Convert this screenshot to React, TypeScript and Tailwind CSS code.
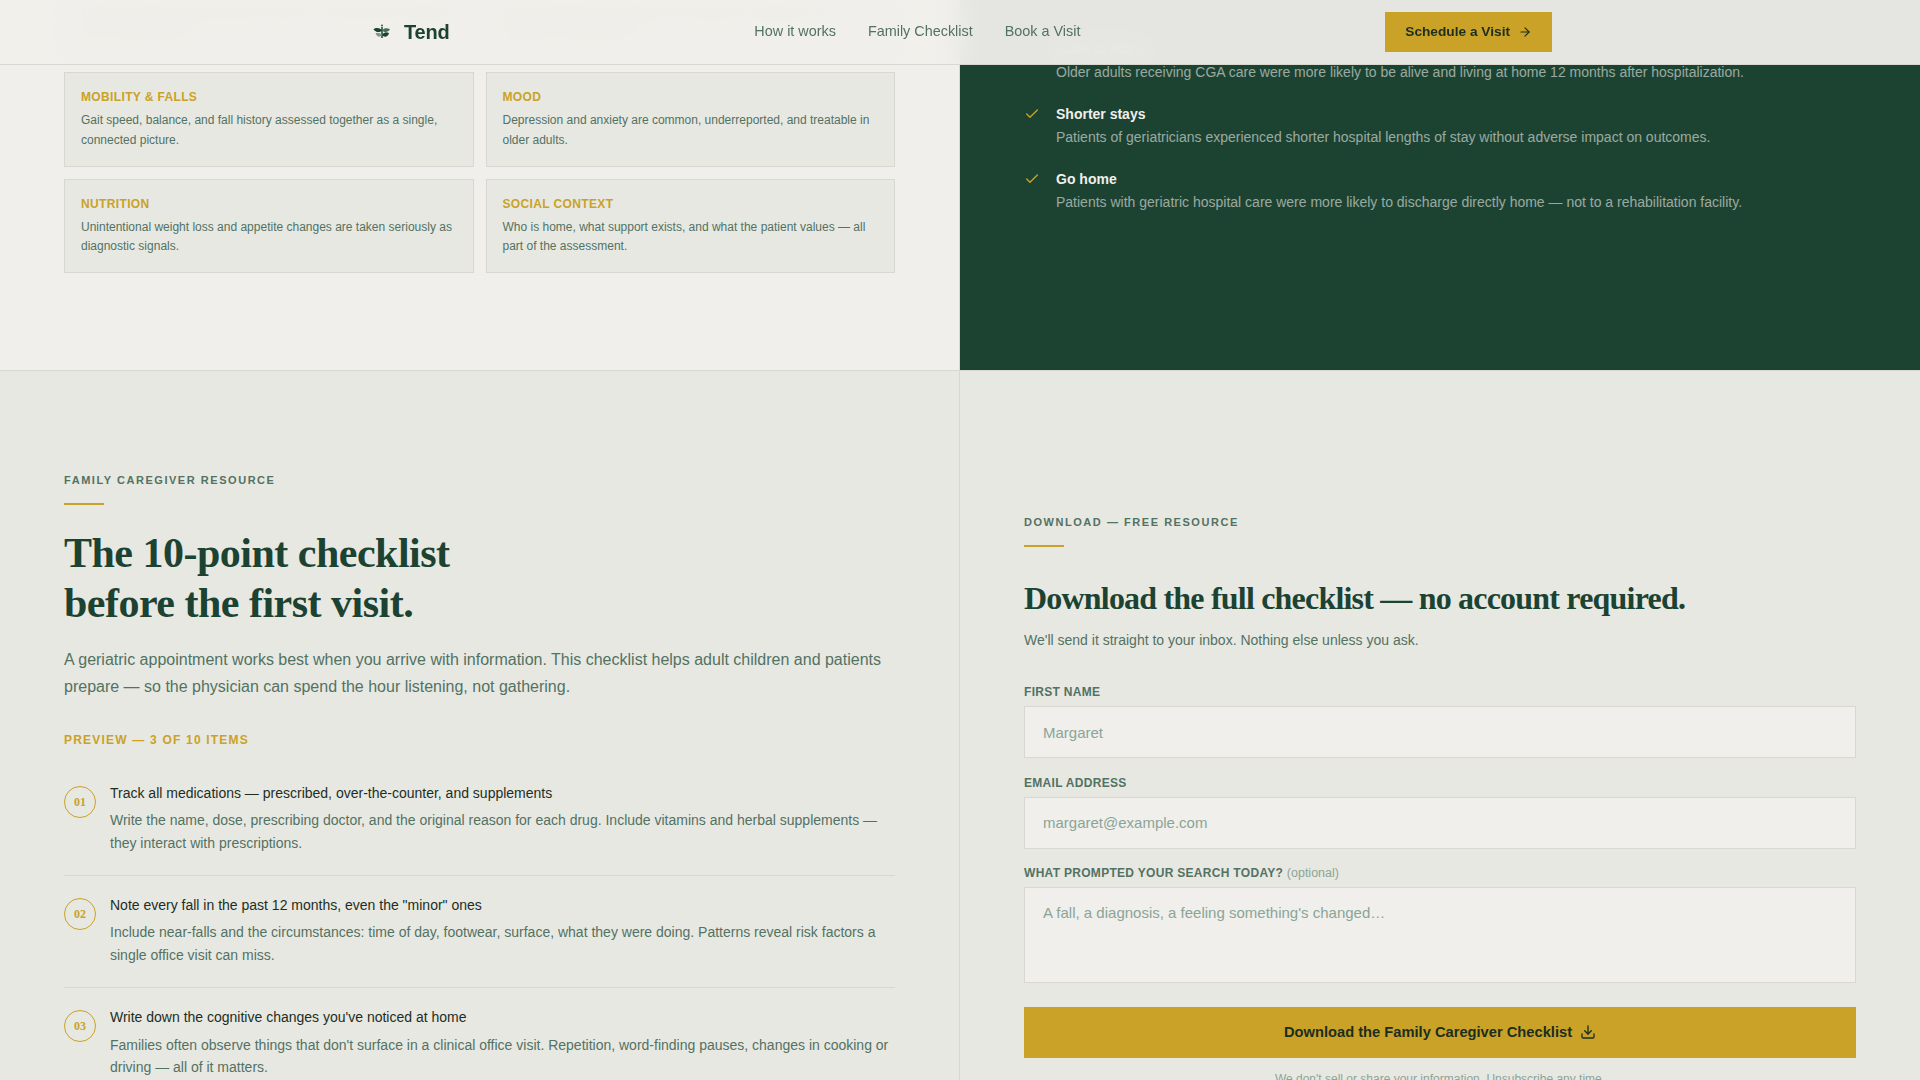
import { ArrowRight, Check, Download } from "lucide-react";

const cards = [
  { title: "Cognition", body: "Memory, attention, and executive function are screened with validated tools, not guessed at." },
  { title: "Medications", body: "Every prescription is reviewed for interactions, duplication, and whether it is still needed." },
  { title: "Mobility & Falls", body: "Gait speed, balance, and fall history assessed together as a single, connected picture." },
  { title: "Mood", body: "Depression and anxiety are common, underreported, and treatable in older adults." },
  { title: "Nutrition", body: "Unintentional weight loss and appetite changes are taken seriously as diagnostic signals." },
  { title: "Social Context", body: "Who is home, what support exists, and what the patient values — all part of the assessment." },
];

const outcomes = [
  { title: "Alive at home", body: "Older adults receiving CGA care were more likely to be alive and living at home 12 months after hospitalization." },
  { title: "Shorter stays", body: "Patients of geriatricians experienced shorter hospital lengths of stay without adverse impact on outcomes." },
  { title: "Go home", body: "Patients with geriatric hospital care were more likely to discharge directly home — not to a rehabilitation facility." },
];

const checklist = [
  {
    num: "01",
    title: "Track all medications — prescribed, over-the-counter, and supplements",
    body: "Write the name, dose, prescribing doctor, and the original reason for each drug. Include vitamins and herbal supplements — they interact with prescriptions.",
  },
  {
    num: "02",
    title: 'Note every fall in the past 12 months, even the "minor" ones',
    body: "Include near-falls and the circumstances: time of day, footwear, surface, what they were doing. Patterns reveal risk factors a single office visit can miss.",
  },
  {
    num: "03",
    title: "Write down the cognitive changes you've noticed at home",
    body: "Families often observe things that don't surface in a clinical office visit. Repetition, word-finding pauses, changes in cooking or driving — all of it matters.",
  },
];

const labelClass = "block text-[12px] font-bold uppercase tracking-[0.025em] leading-[18px] text-[#527262]";
const fieldClass = "block w-full bg-[#f0efeb] border border-[#d8d8d0] px-[18px] text-[15px] text-[#1c4332] placeholder:text-[#8aa598] focus:outline-none";

function Logo() {
  return (
    <svg width="20" height="20" viewBox="0 0 20 20" fill="none" aria-hidden="true">
      <circle cx="10" cy="3.500" r="1.100" fill="#4a6b5a" />
      <path d="M10 5v11" stroke="#1c4332" strokeWidth="1.500" />
      <path d="M10 8.500C7.500 5.300 3.500 5.700 1.500 7.300 3.500 10.600 7.500 11 10 8.500Z" fill="#1c4332" />
      <path d="M10 8.500c2.300-2.900 5.500-2.600 8-1.200-1.800 3-5.400 3.600-8 1.200Z" fill="#4a6b5a" />
      <path d="M10 13c1.700-3 5-3.300 7-1.700-1 3.500-4.700 4.700-7 1.700Z" fill="#1c4332" />
      <path d="M10 13C8.300 10.500 5.500 10.200 3.500 11.300 4.700 15 8 15.900 10 13Z" fill="#7d9c8a" />
    </svg>
  );
}

function Eyebrow({ children }: { children: string }) {
  return (
    <>
      <p className="text-[11px] font-bold uppercase tracking-[0.14em] leading-[16px] text-[#527262]">{children}</p>
      <div className="mt-[15px] h-[2px] w-10 bg-[#c9a227]" />
    </>
  );
}

export default function App() {
  return (
    <div className="relative h-screen overflow-hidden bg-[#e8e8e2] font-['Liberation_Sans',Arial,sans-serif]">
      <nav className="absolute inset-x-0 top-0 z-10 h-[65px] border-b border-[#d8d8d0] bg-[#f0efeb]/95 backdrop-blur-md">
        <div className="mx-auto flex h-full max-w-[1280px] items-center justify-between px-12">
          <div className="flex items-center gap-3">
            <span className="ml-[4px]"><Logo /></span>
            <span className="text-[20px] font-bold tracking-[-0.01em] text-[#1c4332]">Tend</span>
          </div>
          <div className="flex items-center gap-8 text-[14.4px] text-[#527262]">
            <a href="#how">How it works</a>
            <a href="#checklist">Family Checklist</a>
            <a href="#book">Book a Visit</a>
          </div>
          <button type="button" className="flex h-10 items-center gap-2 bg-[#c9a227] px-5 text-[13.7px] font-bold text-[#1c2e1f]">
            Schedule a Visit
            <ArrowRight size={14} />
          </button>
        </div>
      </nav>

      <div className="-mt-[34px]">
        <section className="grid grid-cols-2">
          <div className="border-r border-[#d8d8d0] bg-[#f0efeb] pl-16 pr-16 pb-[97px]">
            <div className="grid grid-cols-2 gap-3">
              {cards.map((card) => (
                <div key={card.title} className="border border-[#d8d8d0] bg-[#e8e8e2] px-4 pt-[15px] pb-4">
                  <h3 className="text-[12px] font-bold uppercase tracking-[0.03em] leading-[19px] text-[#c9a227]">{card.title}</h3>
                  <p className="mt-1 text-[12px] leading-[19.2px] text-[#527262]">{card.body}</p>
                </div>
              ))}
            </div>
          </div>
          <div className="bg-[#1c4332] px-16 pt-[73px]">
            <div className="flex flex-col gap-[21px]">
              {outcomes.map((item) => (
                <div key={item.title} className="flex gap-4">
                  <Check size={16} className="mt-[2px] shrink-0 text-[#c9a227]" />
                  <div>
                    <h4 className="text-[14px] font-bold leading-[20px] text-[#f0efeb]">{item.title}</h4>
                    <p className="mt-[3px] text-[14px] leading-[21px] text-[#f0efeb]/60">{item.body}</p>
                  </div>
                </div>
              ))}
            </div>
          </div>
        </section>

        <section className="grid grid-cols-2 border-t border-[#d8d8d0]">
          <div className="border-r border-[#d8d8d0] pl-16 pr-16 pt-[101px]">
            <Eyebrow>Family Caregiver Resource</Eyebrow>
            <h2 className="mt-[23px] font-['Liberation_Serif',serif] text-[42px] font-bold leading-[50px] tracking-[-0.012em] text-[#1c4332]">
              The 10-point checklist<br />before the first visit.
            </h2>
            <p className="mt-[18px] text-[16px] leading-[27.2px] text-[#527262]">
              A geriatric appointment works best when you arrive with information. This checklist helps adult children and patients prepare — so the physician can spend the hour listening, not gathering.
            </p>
            <p className="mt-[30px] text-[12px] font-bold uppercase tracking-[0.1em] leading-[18px] text-[#c9a227]">Preview — 3 of 10 items</p>
            <div className="mt-[34px]">
              {checklist.map((item, index) => (
                <div key={item.num} className={`flex gap-[14px] pb-[21px] ${index > 0 ? "mt-[19px] " : ""}${index < 2 ? "border-b border-[#d8d8d0]" : ""}`}>
                  <div className="mt-[3px] flex h-8 w-8 shrink-0 items-center justify-center rounded-full border-[1.5px] border-[#c9a227] font-['Liberation_Serif',serif] text-[12px] font-bold text-[#c9a227]">
                    {item.num}
                  </div>
                  <div>
                    <h4 className="text-[14px] leading-[20px] text-[#1c2e1f]">{item.title}</h4>
                    <p className="mt-[6.5px] text-[14px] leading-[22.400px] text-[#527262]">{item.body}</p>
                  </div>
                </div>
              ))}
            </div>
          </div>

          <div className="pl-16 pr-16 pt-[143px]">
            <Eyebrow>Download — Free Resource</Eyebrow>
            <h2 className="mt-[30px] font-['Liberation_Serif',serif] text-[32px] font-bold leading-[42px] tracking-[-0.025em] text-[#1c4332]">
              Download the full checklist — no account required.
            </h2>
            <p className="mt-[10px] text-[14px] leading-[22px] text-[#527262]">We'll send it straight to your inbox. Nothing else unless you ask.</p>
            <form className="mt-[32px] flex flex-col gap-[15.5px]">
              <div>
                <label htmlFor="first-name" className={labelClass}>First Name</label>
                <input id="first-name" placeholder="Margaret" className={`${fieldClass} mt-[5px] h-[52px]`} />
              </div>
              <div>
                <label htmlFor="email" className={labelClass}>Email Address</label>
                <input id="email" type="email" placeholder="margaret@example.com" className={`${fieldClass} mt-[5px] h-[52px]`} />
              </div>
              <div>
                <label htmlFor="prompt" className={labelClass}>
                  What prompted your search today? <span className="text-[12.5px] font-normal normal-case tracking-normal text-[#8aa598]">(optional)</span>
                </label>
                <textarea id="prompt" placeholder="A fall, a diagnosis, a feeling something's changed…" className={`${fieldClass} mt-[5px] h-[96px] resize-none py-[14px]`} />
              </div>
              <button type="button" className="mt-2 flex h-[51px] w-full items-center justify-center gap-2 bg-[#c9a227] text-[14.7px] font-bold text-[#1c2e1f]">
                Download the Family Caregiver Checklist
                <Download size={16} />
              </button>
            </form>
            <p className="mt-[12px] text-center text-[12px] leading-[18px] text-[#8aa598]">We don't sell or share your information. Unsubscribe any time.</p>
          </div>
        </section>
      </div>
    </div>
  );
}
